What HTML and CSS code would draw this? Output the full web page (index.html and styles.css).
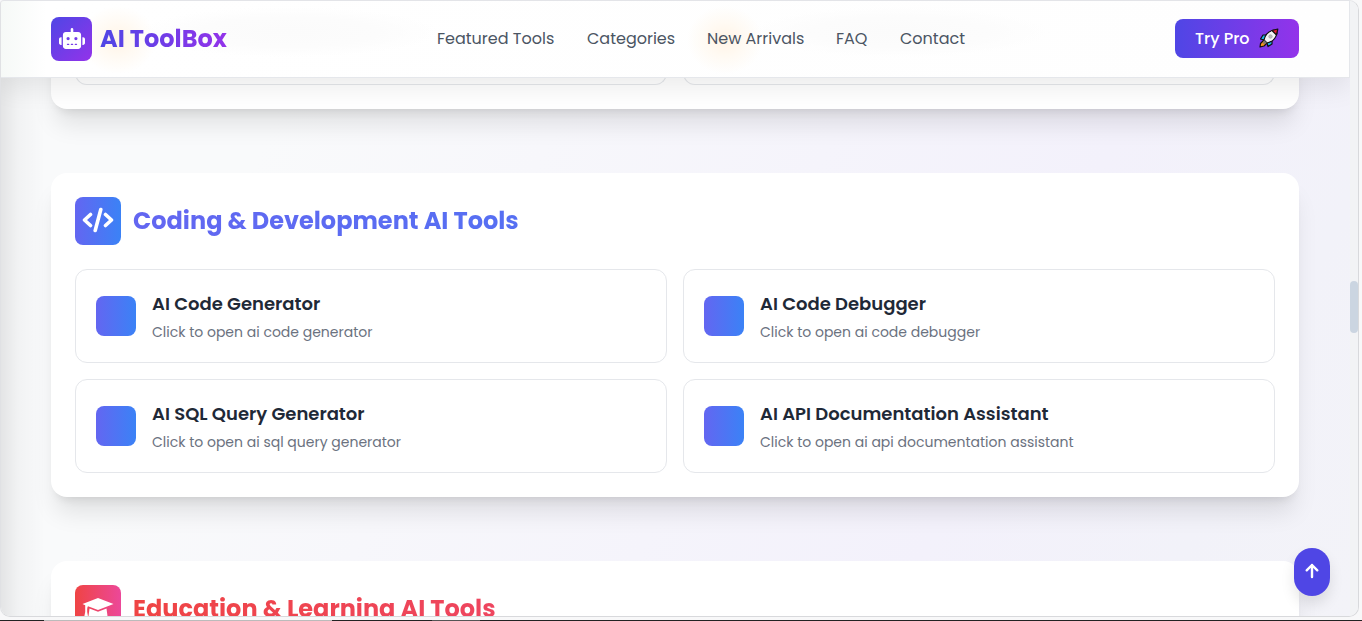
FILE: index.html
```html
<!DOCTYPE html>
<html lang="en">
<head>
<meta charset="utf-8">
<title>AI ToolBox</title>
<link rel="stylesheet" href="styles.css">
</head>
<body>
<div class="viewport">
  <div class="page">
    <header class="header">
      <div class="glow glow-a"></div><div class="glow glow-b"></div>
      <div class="haze haze-a"></div><div class="haze haze-b"></div>
      <div class="brand">
        <span class="brand-icon"><svg viewBox="0 0 640 512" width="26" height="21" fill="#fff"><path fill-rule="evenodd" d="M320 0c18 0 32 14 32 32v64h120c40 0 72 32 72 72v272c0 40-32 72-72 72H168c-40 0-72-32-72-72V168c0-40 32-72 72-72h120V32c0-18 14-32 32-32zM208 384c-9 0-16 7-16 16s7 16 16 16h32c9 0 16-7 16-16s-7-16-16-16zm96 0c-9 0-16 7-16 16s7 16 16 16h32c9 0 16-7 16-16s-7-16-16-16zm96 0c-9 0-16 7-16 16s7 16 16 16h32c9 0 16-7 16-16s-7-16-16-16zM264 256a40 40 0 1 0-80 0a40 40 0 1 0 80 0zm152 40a40 40 0 1 0 0-80a40 40 0 1 0 0 80zM48 224h16v192H48c-26 0-48-22-48-48v-96c0-26 22-48 48-48zm544 0c26 0 48 22 48 48v96c0 26-22 48-48 48h-16V224z"/></svg></span>
        <span class="brand-name">AI ToolBox</span>
      </div>
      <nav class="nav">
        <a class="n1">Featured Tools</a><a class="n2">Categories</a><a class="n3">New Arrivals</a><a class="n4">FAQ</a><a class="n5">Contact</a>
      </nav>
      <a class="pro"><span>Try Pro</span>
        <svg viewBox="0 0 20 20" width="20" height="20" stroke="#111" stroke-width="1.2" stroke-linejoin="round"><path fill="#f7941d" d="M5 12L1.500 15.500L1 19L5 18L8 15z"/><path fill="#20b4e8" d="M8 7L4 7L1.500 11L5 12zM13 12L13 16L9 18.500L8 15z"/><path fill="#f4f4f6" d="M5 12C6 7 10 3 15 2L18 5C17 10 13 14 8 15z"/><path fill="#e81c32" d="M13 2.500L18.800 1L17.500 7z"/><circle cx="11.500" cy="8.500" r="1.800" fill="#bbb" stroke="#999" stroke-width=".5"/><path d="M5 12L8 15L4 16z" fill="#777" stroke="none"/></svg>
      </a>
    </header>
    <main class="main">
      <section class="panel panel-end"><div class="card-end"></div><div class="card-end"></div></section>
      <section class="panel coding">
        <div class="heading">
          <span class="heading-icon"><svg viewBox="0 0 32 26" width="32" height="26" fill="none" stroke="#fff" stroke-width="3.600" stroke-linecap="round" stroke-linejoin="round"><path d="M8.500 7.500L2.500 13L8.500 18.500M23.500 7.500L29.500 13L23.500 18.500M18.800 2.500L13.200 23.500"/></svg></span>
          <h2 class="t-code">Coding &amp; Development AI Tools</h2>
        </div>
        <div class="grid">
          <article class="card"><i class="tile"></i><div><h3>AI Code Generator</h3><p>Click to open ai code generator</p></div></article>
          <article class="card"><i class="tile"></i><div><h3>AI Code Debugger</h3><p>Click to open ai code debugger</p></div></article>
          <article class="card"><i class="tile"></i><div><h3>AI SQL Query Generator</h3><p>Click to open ai sql query generator</p></div></article>
          <article class="card"><i class="tile"></i><div><h3>AI API Documentation Assistant</h3><p>Click to open ai api documentation assistant</p></div></article>
        </div>
      </section>
      <section class="panel education">
        <div class="heading">
          <span class="heading-icon"><svg viewBox="0 0 34 28" width="34" height="28" fill="#fff"><path d="M17 3L32.500 9L17 15L7 11.200C6 12.500 6.200 14.500 6.200 17L7.500 24H2.800L4.200 17V10.200L1.500 9z"/><path d="M8.500 13.600L17 16.800L25.500 13.600L26.500 21C22 26 12 26 7.500 21z"/></svg></span>
          <h2 class="t-edu">Education &amp; Learning AI Tools</h2>
        </div>
      </section>
    </main>
  </div>
  <div class="scrollbar"><div class="thumb"></div></div>
  <button class="top" aria-label="Back to top"><svg viewBox="0 0 14 16" width="14" height="16" fill="none" stroke="#fff" stroke-width="2.400" stroke-linecap="round" stroke-linejoin="round"><path d="M7 14V2M1.700 7.300L7 2L12.300 7.300"/></svg></button>
</div>
<div class="taskline"></div>
</body>
</html>
```
FILE: styles.css
```css
* { box-sizing: border-box; }
body { margin: 0; width: 1362px; height: 621px; overflow: hidden; background: #f8f8f9; font-family: Poppins, Inter, "Open Sans", sans-serif; display: flex; flex-direction: column; }
h2, h3, p { margin: 0; white-space: nowrap; }
.viewport { position: relative; display: flex; width: 1359px; height: 617px; border: 1px solid #d8d9dc; border-top-color: #e3e4e8; border-left-color: #e0e1e4; border-radius: 4px 10px 10px 10px; overflow: hidden; }
.page { width: 1349px; height: 615px; overflow: hidden; background: linear-gradient(90deg, rgba(0,0,0,.085), rgba(0,0,0,.03) 17px, transparent 44px), linear-gradient(115deg, #f9fafb 20%, #f3f1fb 72%, #f2f2f9 88%, #f3f3f8); }
.header { position: relative; z-index: 2; height: 77px; display: flex; align-items: center; justify-content: space-between; padding: 0 50px; border: solid #e5e7eb; border-width: 0 1px 1px 0; background: linear-gradient(90deg, #f6f9f7, #fff 45px, #fefefe); box-shadow: 0 10px 26px rgba(0,0,0,.08); }
.glow { position: absolute; top: 5px; width: 76px; height: 68px; background: radial-gradient(closest-side, #fff4e6, #fffaf3 50%, transparent); }
.glow-a { left: 79px; }
.glow-b { left: 686px; }
.haze { position: absolute; top: 6px; width: 300px; height: 50px; background: radial-gradient(closest-side, #fbfbfb, #fcfcfc 60%, transparent); }
.haze-a { left: 138px; }
.haze-b { left: 748px; }
.brand { position: relative; display: flex; align-items: center; gap: 8px; width: 214px; }
.brand-icon { display: flex; align-items: center; justify-content: center; width: 41px; height: 44px; border-radius: 8px; background: linear-gradient(135deg, #4f46e5, #9333ea); }
.brand-icon svg { margin-bottom: 1px; }
.brand-name { font-size: 24px; font-weight: 700; line-height: 32px; color: transparent; background: linear-gradient(90deg, #4f46e5, #9333ea); background-clip: text; white-space: nowrap; }
.nav { position: absolute; left: 436px; display: flex; gap: 32px; font-size: 16px; line-height: 24px; color: #4b5563; white-space: nowrap; }
.n1 { width: 118px; } .n2 { width: 88px; } .n3 { width: 97px; } .n4 { width: 32px; } .n5 { width: 66px; }
.pro { display: flex; align-items: center; gap: 9px; width: 124px; height: 39px; margin-bottom: 2px; padding-left: 20px; border-radius: 8px; background: linear-gradient(90deg, #4f46e5, #9333ea); color: #fff; font-size: 16px; font-weight: 500; white-space: nowrap; }
.main { display: flex; flex-direction: column; gap: 64px; margin-top: -77px; padding: 0 51px 0 50px; }
.panel { flex: none; background: #fff; border-radius: 16px; padding: 24px; box-shadow: 0 20px 25px -5px rgba(0,0,0,.1), 0 8px 10px -6px rgba(0,0,0,.1); }
.panel-end { display: grid; grid-template-columns: 1fr 1fr; gap: 16px; height: 108px; padding: 0 24px 24px; border-radius: 0 0 16px 16px; }
.card-end { border: 1px solid #e5e7eb; border-top: 0; border-radius: 0 0 12px 12px; }
.coding { height: 324px; }
.education { height: 160px; }
.heading { display: flex; align-items: center; gap: 12px; height: 48px; margin-bottom: 24px; }
.heading-icon { display: flex; align-items: center; justify-content: center; width: 46px; height: 48px; border-radius: 8px; background: linear-gradient(90deg, #6366f1, #3b82f6); }
.coding .heading-icon svg { margin-bottom: 3px; }
.education .heading-icon { background: linear-gradient(90deg, #ef4444, #ec4899); }
.education .heading-icon svg { margin-bottom: 1px; }
h2 { flex: 1; font-size: 24px; line-height: 32px; font-weight: 700; color: transparent; background-clip: text; }
.t-code { background-image: linear-gradient(90deg, #6366f1, #3b82f6); }
.t-edu { background-image: linear-gradient(90deg, #ef4444, #ec4899); }
.grid { display: grid; grid-template-columns: 1fr 1fr; gap: 16px; }
.card { display: flex; align-items: center; gap: 16px; height: 94px; padding: 20px; border: 1px solid #e5e7eb; border-radius: 12px; }
.tile { width: 40px; height: 40px; border-radius: 8px; background: linear-gradient(90deg, #6366f1, #3b82f6); }
h3 { font-size: 18px; line-height: 28px; font-weight: 600; color: #1f2937; }
.card p { margin-top: 4px; font-size: 14px; line-height: 20px; color: #6b7280; }
.scrollbar { width: 8px; height: 615px; background: #f2f3f5; padding-top: 280px; }
.thumb { height: 52px; border-radius: 4px; background: #cbd5e1; }
.top { position: absolute; left: 1293px; top: 547px; z-index: 3; width: 36px; height: 48px; padding: 0 0 2px; border: 0; border-radius: 18px; display: flex; align-items: center; justify-content: center; background: #4f46e5; box-shadow: 0 8px 14px rgba(0,0,0,.1); }
.taskline { height: 1px; margin-top: 3px; background: linear-gradient(90deg, #222 44px, #bbb 44px 332px, #222 332px 432px, #555 432px 480px, #222 480px); }
```
